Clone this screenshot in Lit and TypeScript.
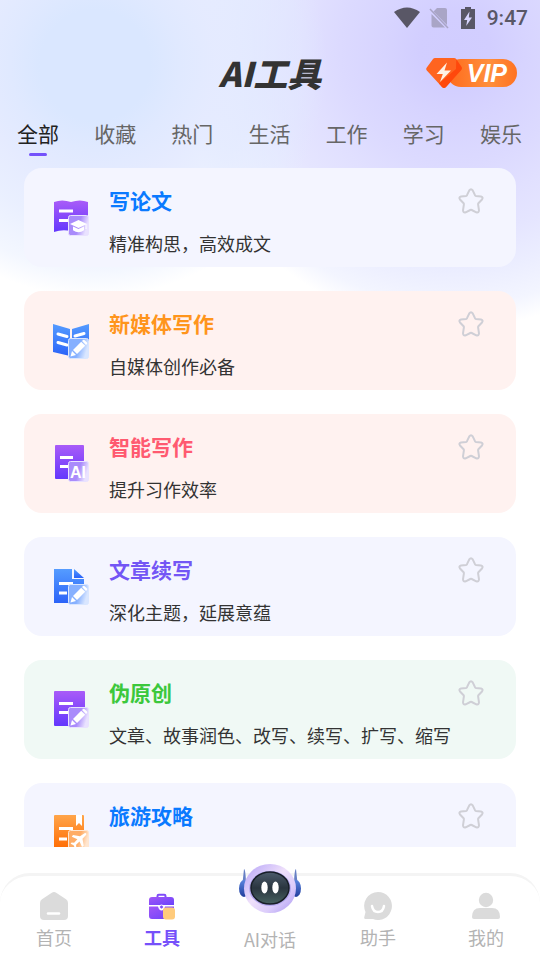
import { LitElement, html, css, svg } from "lit";
import { customElement, property, state } from "lit/decorators.js";
import { classMap } from "lit/directives/class-map.js";

type Tone = "violet" | "blue" | "orange";

interface Tool {
  title: string;
  desc: string;
  icon: string;
  tone: Tone;
  colour: string;
  bg: string;
}

const TOOLS: Tool[] = [
  { title: "写论文", desc: "精准构思，高效成文", icon: "thesis", tone: "violet", colour: "c-blue", bg: "b-lilac" },
  { title: "新媒体写作", desc: "自媒体创作必备", icon: "media", tone: "blue", colour: "c-orange", bg: "b-rose" },
  { title: "智能写作", desc: "提升习作效率", icon: "smart", tone: "violet", colour: "c-red", bg: "b-rose" },
  { title: "文章续写", desc: "深化主题，延展意蕴", icon: "article", tone: "blue", colour: "c-violet", bg: "b-lilac" },
  { title: "伪原创", desc: "文章、故事润色、改写、续写、扩写、缩写", icon: "rewrite", tone: "violet", colour: "c-green", bg: "b-mint" },
  { title: "旅游攻略", desc: "", icon: "travel", tone: "orange", colour: "c-blue", bg: "b-lilac" },
];

const TABS = ["全部", "收藏", "热门", "生活", "工作", "学习", "娱乐"];

const TONES: Record<Tone, [string, string, string, string]> = {
  violet: ["#a95cf8", "#6337fd", "#a98bfb", "#e9e2ff"],
  blue: ["#559cff", "#2b63f8", "#86b0ff", "#d9e6ff"],
  orange: ["#ffa54a", "#ff6a00", "#ffad66", "#ffe6d0"],
};

const pencil = svg`
  <path d="M17.500 34.500l1.500-5.500 4 4z" fill="#fff"/>
  <path d="M20 28l8.200-8.200 4 4-8.200 8.200z" fill="#fff"/>
  <path d="M29 19l.8-.8a1.300 1.300 0 0 1 1.900 0l2.100 2.100a1.300 1.300 0 0 1 0 1.900l-.8.800z" fill="#fff"/>`;

const SHAPES: Record<string, { body: unknown; badge: unknown }> = {
  thesis: {
    body: svg`
      <path d="M1 3Q9 0 18 3Q27 0 35 3V32Q27 30 18 32Q9 30 1 33z" fill="url(#main)"/>
      <path d="M6 12h14M6 21.500h9" stroke="#fff" stroke-width="3"/>`,
    badge: svg`
      <path d="M17 25l8.500-4 8.500 4-8.500 4z" fill="#fff"/>
      <path d="M20 27.500l5.500 2.500 5.500-2.500v3.800q-5.500 4-11 0z" fill="#fff"/>
      <path d="M33 25v5" stroke="#fff"/>`,
  },
  media: {
    body: svg`
      <path d="M0 2l17 5v27L0 30z" fill="url(#main)"/>
      <path d="M19 7l17-5v28l-17 4z" fill="url(#main)"/>
      <path d="M5 12l9 2.500M5 20.500l9 2.500M22 14l9-2.500" stroke="#fff" stroke-width="3" stroke-linecap="round"/>`,
    badge: pencil,
  },
  smart: {
    body: svg`
      <rect x="2" y="0" width="29" height="34" rx="1" fill="url(#main)"/>
      <path d="M7 12.500h13M7 21.500h8" stroke="#fff" stroke-width="3"/>`,
    badge: svg`<text class="ai" x="17" y="33">AI</text>`,
  },
  article: {
    body: svg`
      <path d="M1 1h18v10h12v24H1z" fill="url(#main)"/>
      <path d="M21 1l10 9H21z" fill="url(#main)"/>
      <path d="M6 15.500h14M6 25h8" stroke="#fff" stroke-width="3"/>`,
    badge: pencil,
  },
  rewrite: {
    body: svg`
      <rect x="1" y="0" width="31" height="35" rx="1" fill="url(#main)"/>
      <path d="M6 12.500h14M6 21.500h9" stroke="#fff" stroke-width="3"/>`,
    badge: pencil,
  },
  travel: {
    body: svg`
      <rect x="1" y="1" width="30" height="35" rx="1" fill="url(#main)"/>
      <path d="M23 1h6v11l-3-3-3 3z" fill="#fff"/>
      <path d="M6 14.500h14M6 25h8" stroke="#fff" stroke-width="3"/>`,
    badge: svg`
      <path d="M32 19q2 0 1 2l-3.500 3.800 1.200 7-1.600 1.200-2.600-5.600-3.400 3.300.2 2.500-1.300 1-1.400-3-3-1.400 1-1.300 2.500.2 3.300-3.400-5.600-2.600 1.200-1.600 7 1.200z" fill="#fff"/>`,
  },
};

@customElement("tool-icon")
class ToolIcon extends LitElement {
  @property() name = "thesis";
  @property() tone: Tone = "violet";

  static styles = css`
    :host { display: block; width: 36px; height: 37px; }
    .art { display: block; }
    .ai { font: 700 16px "Liberation Sans", sans-serif; fill: #fff; }
  `;

  render() {
    const [a, b, c, d] = TONES[this.tone];
    const shape = SHAPES[this.name];
    return html`<svg class="art" width="36" height="37" viewBox="0 0 36 37" fill="none" aria-hidden="true">
      <defs>
        <linearGradient id="main" x1="0" y1="0" x2="0" y2="1">
          <stop offset="0" stop-color=${a} /><stop offset="1" stop-color=${b} />
        </linearGradient>
        <linearGradient id="glass" x1="0" y1="0" x2="1" y2="0.3">
          <stop offset="0" stop-color=${c} /><stop offset="0.6" stop-color=${c} /><stop offset="1" stop-color=${d} />
        </linearGradient>
      </defs>
      ${shape.body}
      <rect x="15.500" y="16.500" width="20" height="20" rx="2" fill="url(#glass)" stroke=${d} />
      ${shape.badge}
    </svg>`;
  }
}

@customElement("tool-card")
class ToolCard extends LitElement {
  @property({ attribute: false }) tool!: Tool;
  @state() private starred = false;

  static styles = css`
    :host { display: block; flex: none; }
    .card { display: flex; align-items: center; gap: 20px; padding: 17px 32px 12px 29px; border-radius: 18px; }
    .b-lilac { background: #f4f5ff; }
    .b-rose { background: #fff2f0; }
    .b-mint { background: #f0f9f5; }
    .icon { margin-bottom: 6px; }
    .body { flex: 1; min-width: 0; display: flex; flex-direction: column; gap: 16px; }
    .title { margin: 0; font-size: 21px; line-height: 30px; font-weight: 700; }
    .desc { margin: 0; min-height: 24px; font-size: 18px; line-height: 24px; color: #333; white-space: nowrap; }
    .c-blue { color: #0a7aff; }
    .c-orange { color: #ff951c; }
    .c-red { color: #ff5a70; }
    .c-violet { color: #7356f5; }
    .c-green { color: #3cc83c; }
    .star { align-self: flex-start; padding: 0; border: 0; background: none; cursor: pointer; }
    .glyph { display: block; margin-top: 3px; fill: none; stroke: #cfcfd6; }
    .on { fill: #ffc53d; stroke: #ffc53d; }
  `;

  render() {
    const t = this.tool;
    return html`<article class="card ${t.bg}">
      <tool-icon class="icon" name=${t.icon} tone=${t.tone}></tool-icon>
      <div class="body">
        <h2 class="title ${t.colour}">${t.title}</h2>
        <p class="desc">${t.desc}</p>
      </div>
      <button class="star" aria-label="收藏${t.title}" aria-pressed=${this.starred} @click=${() => (this.starred = !this.starred)}>
        <svg class=${classMap({ glyph: true, on: this.starred })} width="26" height="26" viewBox="0 0 26 26" stroke-width="2" stroke-linejoin="round">
          <path d="M11.300 2.300Q13 0 14.700 2.300L17 7.200Q17.300 7.800 18 7.900L23 8.500Q25.600 9.300 24 11.500L20.400 15.200Q20 15.700 20.100 16.300L21 22.300Q20.900 25 18.300 24.300L13.700 22Q13 21.700 12.300 22L7.700 24.300Q5.100 25 5 22.300L5.900 16.300Q6 15.700 5.600 15.200L2 11.500Q.4 9.300 3 8.500L8 7.900Q8.700 7.800 9 7.200z" />
        </svg>
      </button>
    </article>`;
  }
}

const homeIcon = svg`<svg class="art" width="28" height="28" viewBox="0 0 28 28" aria-hidden="true">
  <path d="M11.800.7q2.200-1.400 4.400 0L26 7.200q2 1.300 2 3.800v13q0 4-4 4H4q-4 0-4-4V11q0-2.500 2-3.800z" fill="#dbdbdb"/>
  <path d="M8 21.500h11" stroke="#fff" stroke-width="2.500" stroke-linecap="round"/></svg>`;

const toolsIcon = svg`<svg class="art" width="28" height="28" viewBox="0 0 28 28" aria-hidden="true">
  <defs><linearGradient id="bag" x1="0" y1="0" x2="1" y2="1"><stop offset="0" stop-color="#a257f7"/><stop offset="1" stop-color="#6a42fb"/></linearGradient></defs>
  <path d="M9.500 6V4q0-1.300 1.300-1.300h5.400Q17.500 2.700 17.500 4v2" fill="none" stroke="#7f4bfa" stroke-width="2"/>
  <path d="M1 13V8q0-3 3-3h19q3 0 3 3v5z" fill="url(#bag)"/>
  <path d="M1 14.500h9q1 4 3.500 4t3.500-4h9V24q0 3-3 3H4q-3 0-3-3z" fill="url(#bag)"/>
  <circle cx="13.500" cy="15" r="2" fill="#7f4bfa" stroke="#fff"/>
  <rect x="15" y="15.500" width="12" height="12" rx="3" fill="#ffcb7c"/></svg>`;

const robotIcon = svg`<svg class="art" width="64" height="52" viewBox="0 0 64 52" aria-hidden="true">
  <defs>
    <linearGradient id="shell" x1="0" y1="0" x2="1" y2="1"><stop offset="0" stop-color="#b3a1f7"/><stop offset=".45" stop-color="#efe0fb"/><stop offset=".7" stop-color="#dccdfb"/><stop offset="1" stop-color="#a795f2"/></linearGradient>
    <linearGradient id="face" x1="0" y1="0" x2="0" y2="1"><stop offset="0" stop-color="#4c5b6b"/><stop offset=".5" stop-color="#2a353f"/><stop offset="1" stop-color="#46615f"/></linearGradient>
    <linearGradient id="ear" x1="0" y1="0" x2="0" y2="1"><stop offset="0" stop-color="#5a85df"/><stop offset="1" stop-color="#213d9c"/></linearGradient>
  </defs>
  <path d="M4.500 20L6 6q1.500 0 2 13zM59.500 20L58 6q-1.500 0-2 13z" fill="#6780c5"/>
  <ellipse cx="6" cy="25.500" rx="5" ry="8.500" fill="url(#ear)"/>
  <ellipse cx="58" cy="25.500" rx="5" ry="8.500" fill="url(#ear)"/>
  <ellipse cx="32" cy="25.500" rx="26" ry="24.500" fill="url(#shell)"/>
  <ellipse cx="32" cy="25.500" rx="21" ry="17.500" fill="#b5a9f0"/>
  <ellipse cx="32" cy="25" rx="19" ry="16" fill="url(#face)" stroke="#171e26" stroke-width="1.500"/>
  <ellipse cx="26.500" cy="24.500" rx="3.200" ry="6" fill="#fff"/>
  <ellipse cx="37.500" cy="24.500" rx="3.200" ry="6" fill="#fff"/></svg>`;

const helperIcon = svg`<svg class="art" width="28" height="28" viewBox="0 0 28 28" aria-hidden="true">
  <path d="M14 0a14 14 0 1 1-5 27.100H1.500Q0 27.100.2 25.500L1.500 20A14 14 0 0 1 14 0z" fill="#dbdbdb"/>
  <path d="M8 14q1 6 6 6t6-6" fill="none" stroke="#fff" stroke-width="2.500" stroke-linecap="round"/></svg>`;

const mineIcon = svg`<svg class="art" width="28" height="28" viewBox="0 0 28 28" aria-hidden="true">
  <circle cx="14" cy="8" r="7.200" fill="#dbdbdb"/>
  <path d="M0 25q0-9 8-9h12q8 0 8 9 0 2-2 2H2q-2 0-2-2z" fill="#dbdbdb"/></svg>`;

const NAV = [
  { label: "首页", icon: homeIcon, big: false },
  { label: "工具", icon: toolsIcon, big: false },
  { label: "AI对话", icon: robotIcon, big: true },
  { label: "助手", icon: helperIcon, big: false },
  { label: "我的", icon: mineIcon, big: false },
];

@customElement("app-root")
class AppRoot extends LitElement {
  @state() private tab = 0;
  @state() private page = 1;

  static styles = css`
    :host {
      display: flex;
      flex-direction: column;
      height: 100vh;
      overflow: hidden;
      font-family: "Noto Sans CJK SC", sans-serif;
      color: #333;
      background:
        radial-gradient(circle at 95px 65px, #dae7ff 0, #dae7ff 55px, #e0e9ff 85px, rgba(228, 234, 255, 0.95) 120px, rgba(225, 233, 255, 0.7) 160px, rgba(225, 234, 255, 0.4) 205px, rgba(225, 234, 255, 0) 232px),
        radial-gradient(circle at calc(100% - 85px) 50px, #d1cdff 0, #d2ceff 35px, #d7d4ff 70px, #dcdaff 115px, #e1e0ff 150px, #e5e5ff 185px, #ebedff 220px, #f3f5ff 255px, #fff 278px),
        #fff;
    }
    button { font-family: inherit; border: 0; background: none; padding: 0; cursor: pointer; }
    .art { display: block; flex: none; }
    .status { flex: none; display: flex; align-items: center; justify-content: flex-end; height: 36px; padding-right: 12px; color: #595766; }
    .wifi { margin-right: 9px; }
    .sim { margin-right: 12px; }
    .battery { margin-right: 12px; }
    .time { font: 500 21px/24px Roboto, sans-serif; }
    .head { flex: none; display: grid; grid-template-columns: 1fr auto 1fr; align-items: center; height: 74px; padding: 0 23px; }
    .name { grid-column: 2; margin: 0; font-size: 34px; line-height: 40px; font-weight: 900; font-style: italic; }
    .vip { justify-self: end; display: flex; align-items: center; }
    .gem { position: relative; margin-right: -15px; }
    .pill { padding: 0 10px 0 20px; border-radius: 14px; background: linear-gradient(90deg, #ff6a1c, #ff8f3c 60%, #ff7222); color: #fff; font: italic 700 25px/28px "Liberation Sans", sans-serif; }
    .tabs { flex: none; display: flex; justify-content: space-between; height: 58px; padding: 0 18px 0 17px; box-sizing: border-box; }
    .tab { display: flex; flex-direction: column; align-items: center; gap: 4px; padding-top: 7px; box-sizing: border-box; font-size: 21px; line-height: 32px; color: #666; white-space: nowrap; }
    .tab.active { color: #222; }
    .tab.active::after { content: ""; width: 18px; height: 3px; border-radius: 2px; background: #7452fb; }
    .list { flex: 1; min-height: 0; overflow: hidden; display: flex; flex-direction: column; gap: 24px; padding: 0 24px; }
    .nav { flex: none; display: flex; height: 84px; margin-top: 26px; border-top: 3px solid #f4f4f4; border-radius: 30px 30px 0 0; background: #fff; }
    .item { flex: 1; display: flex; flex-direction: column; align-items: center; justify-content: flex-end; gap: 5px; padding-bottom: 11px; font-size: 18px; line-height: 24px; color: #b3b3b3; }
    .item.big { gap: 12px; padding-bottom: 9px; }
    .item.current { color: #7650fa; font-weight: 700; }
  `;

  render() {
    return html`
      <div class="status">
        <svg class="wifi" width="26" height="22" viewBox="0 0 26 22" fill="currentColor"><path d="M0 5Q13-4 26 5L13 21z" /></svg>
        <svg class="sim" width="20" height="22" viewBox="0 0 20 22"><path d="M8 1h8q2 0 2 2v15L4.500 4.500zM2.500 7L16 20.500H4.500q-2 0-2-2z" fill="#a9a5c6" /><path d="M1 2l18 19" stroke="#a9a5c6" stroke-width="1.500" /></svg>
        <svg class="battery" width="14" height="22" viewBox="0 0 14 22"><path d="M4 0h6v2h4v20H0V2h4z" fill="currentColor" /><path d="M8.500 4.500L3 13h3.200L5.200 19 11 10.500H7.800z" fill="#d8d5ff" /></svg>
        <span class="time">9:47</span>
      </div>
      <header class="head">
        <h1 class="name">AI工具</h1>
        <button class="vip">
          <svg class="gem" width="36" height="32" viewBox="0 0 36 32" aria-hidden="true">
            <path d="M9 1h19q1.500 0 2.300 1.200L35.500 10q1 1.500-.3 3L20 30q-2 2-4 0L.8 13.500q-1.200-1.500 0-3L7 2Q7.800 1 9 1z" fill="#ff6420" />
            <path d="M30.300 2.200L35.500 10q1 1.500-.3 3L20 30q-2 2-4 0L13 26.500 30 12z" fill="#ff480c" />
            <path d="M21 5.500L10.500 17h6.300L14 25 25 13.500h-6.500z" fill="#fff1e5" />
          </svg>
          <span class="pill">VIP</span>
        </button>
      </header>
      <nav class="tabs" aria-label="分类">
        ${TABS.map((t, i) => html`<button class=${classMap({ tab: true, active: i === this.tab })} @click=${() => (this.tab = i)}>${t}</button>`)}
      </nav>
      <main class="list">
        ${TOOLS.map((t) => html`<tool-card .tool=${t}></tool-card>`)}
      </main>
      <nav class="nav" aria-label="主导航">
        ${NAV.map((n, i) => html`<button class=${classMap({ item: true, big: n.big, current: i === this.page })} @click=${() => (this.page = i)}>${n.icon}<span>${n.label}</span></button>`)}
      </nav>
    `;
  }
}
